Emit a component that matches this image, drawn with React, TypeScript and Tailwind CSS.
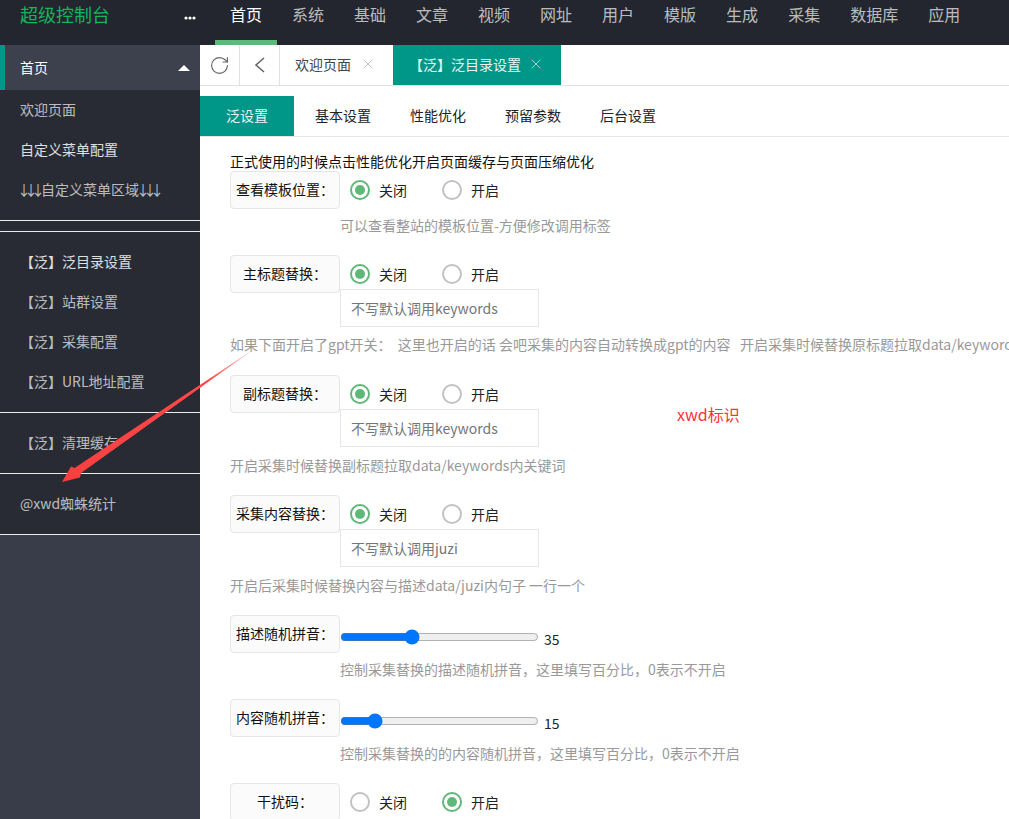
import { RotateCw, X } from "lucide-react";
import type { ReactNode } from "react";

const navItems = ["系统", "基础", "文章", "视频", "网址", "用户", "模版", "生成", "采集", "数据库", "应用"];

function SideItem({ text, bright }: { text: ReactNode; bright?: boolean }) {
  return (
    <div className={`h-10 leading-[38px] pl-5 text-sm whitespace-nowrap ${bright ? "text-white/85" : "text-white/70"}`}>{text}</div>
  );
}

function Arrows() {
  return <span className="inline-block -ml-[3px] mr-[3px] tracking-[-7px]">↓↓↓</span>;
}

function Radio({ on, label, wide }: { on?: boolean; label: string; wide?: boolean }) {
  return (
    <div className={`flex items-center ${wide ? "w-[92px]" : ""}`}>
      <span className={`w-5 h-5 rounded-full border-2 flex items-center justify-center ${on ? "border-[#5fb878]" : "border-[#c2c2c2]"}`}>
        {on && <span className="w-2.5 h-2.5 rounded-full bg-[#5fb878]" />}
      </span>
      <span className="ml-[9px] text-sm text-[#222]">{label}</span>
    </div>
  );
}

function Switch({ open }: { open?: boolean }) {
  return (
    <div className="flex items-center pl-[10px] pb-px">
      <Radio on={!open} label="关闭" wide />
      <Radio on={open} label="开启" />
    </div>
  );
}

function FormRow({ label, children }: { label: string; children: ReactNode }) {
  return (
    <div className="flex h-[38px]">
      <div className="w-[110px] shrink-0 h-[38px] border border-[#e6e6e6] bg-[#fbfbfb] rounded-sm flex items-center justify-center pb-0.5 text-sm text-[#111]">
        {label}
      </div>
      {children}
    </div>
  );
}

function TextBox({ placeholder }: { placeholder: string }) {
  return (
    <input
      placeholder={placeholder}
      className="block ml-[110px] -mt-1 w-[199px] h-[38px] border border-[#e6e6e6] px-2.5 text-sm placeholder:text-[#757575] outline-none"
    />
  );
}

function Help({ text, indent, className }: { text: string; indent?: boolean; className: string }) {
  return (
    <div className={`h-5 leading-[18px] text-sm text-[#999] whitespace-pre ${indent ? "ml-[110px]" : ""} ${className}`}>{text}</div>
  );
}

function Slider({ value }: { value: number }) {
  return (
    <div className="flex items-start">
      <input type="range" min={0} max={100} defaultValue={value} className="block w-[199px] h-4 mt-3.5 ml-0 mr-0 mb-0" />
      <span className="ml-[5px] mt-3.5 text-sm leading-5 text-[#222]">{value}</span>
    </div>
  );
}

export default function App() {
  return (
    <div
      className="relative w-[1009px] h-[819px] overflow-hidden bg-white flex flex-col"
      style={{ fontFamily: '"Noto Sans CJK SC", "Noto Sans", sans-serif' }}
    >
      {/* top bar */}
      <header className="h-[45px] shrink-0 bg-[#23262e] flex">
        <div className="w-[200px] shrink-0 flex pl-5 pr-[4px] justify-between">
          <span className="text-lg leading-7 text-[#16b45c]">超级控制台</span>
          <svg width="12" height="4" viewBox="0 0 12 4" className="mt-4">
            <circle cx="2" cy="2" r="1.6" fill="#fff" />
            <circle cx="6" cy="2" r="1.6" fill="#fff" />
            <circle cx="10" cy="2" r="1.6" fill="#fff" />
          </svg>
        </div>
        <nav className="flex pl-[15px] text-base">
          <div className="h-[45px] w-[62px] text-center leading-7 text-white border-b-[5px] border-[#5fb878]">首页</div>
          {navItems.map((item) => (
            <div key={item} className="px-[15px] leading-7 text-white/70">{item}</div>
          ))}
        </nav>
      </header>

      <div className="flex flex-1 min-h-0">
        {/* sidebar */}
        <aside className="w-[200px] shrink-0 bg-[#393d49]">
          <div className="h-[45px] flex items-center justify-between border-l-[5px] border-[#009688] pl-[15px] pr-[10px] text-sm text-white bg-[#3d404d]">
            <span className="pb-0.5">首页</span>
            <span className="w-0 h-0 border-x-[6px] border-x-transparent border-b-[6px] border-b-white" />
          </div>
          <div className="bg-[#282b33]">
            <div className="pb-[10px]">
              <SideItem text="欢迎页面" />
              <SideItem text="自定义菜单配置" bright />
              <SideItem text={<><Arrows />自定义菜单区域<Arrows /></>} />
            </div>
            <div className="h-px bg-white/90" />
            <div className="h-[10px]" />
            <div className="h-px bg-white/90" />
            <div className="pt-[10px] pb-[10px]">
              <SideItem text="【泛】泛目录设置" bright />
              <SideItem text="【泛】站群设置" />
              <SideItem text="【泛】采集配置" />
              <SideItem text="【泛】URL地址配置" />
            </div>
            <div className="h-px bg-white/90" />
            <div className="py-[10px] h-[60px]">
              <SideItem text="【泛】清理缓存" />
            </div>
            <div className="h-px bg-white/90" />
            <div className="py-[10px] h-[60px]">
              <SideItem text="@xwd蜘蛛统计" />
            </div>
            <div className="h-px bg-white/90" />
          </div>
        </aside>

        {/* main */}
        <main className="flex-1 min-w-0 overflow-hidden">
          <div className="h-[41px] flex border-b border-[#e2e2e2] text-sm">
            <div className="w-10 flex items-center justify-center border-r border-[#e2e2e2] text-[#666]">
              <RotateCw size={21} strokeWidth={1.3} />
            </div>
            <div className="w-10 flex items-center justify-center border-r border-[#e2e2e2] text-[#666]">
              <svg width="12" height="18" viewBox="0 0 12 18" fill="none" stroke="currentColor" strokeWidth="1.6">
                <polyline points="10,2 2,9 10,16" />
              </svg>
            </div>
            <div className="w-[113px] flex items-center pl-[15px] pb-0.5 text-[#444]">
              欢迎页面
              <X size={16} strokeWidth={1.3} className="ml-[9px] text-[#bbb]" />
            </div>
            <div className="w-[168px] h-10 flex items-center pl-4 pb-0.5 bg-[#009688] text-white/90">
              【泛】泛目录设置
              <X size={16} strokeWidth={1.3} className="ml-[7px] text-white/70" />
            </div>
          </div>

          <div className="mt-2.5 h-[41px] flex border-b border-[#e6e6e6] text-sm text-[#222]">
            <div className="w-[94px] h-10 bg-[#009688] text-white/90 flex items-center justify-center pb-0.5">泛设置</div>
            <div className="flex items-center h-10 pl-[21px] pb-0.5 gap-[39px]">
              <span>基本设置</span>
              <span>性能优化</span>
              <span>预留参数</span>
              <span>后台设置</span>
            </div>
          </div>

          <div className="pl-[30px] pt-[15px]">
            <div className="h-[19px] leading-[18px] text-sm text-[#111] whitespace-nowrap">正式使用的时候点击性能优化开启页面缓存与页面压缩优化</div>

            <FormRow label="查看模板位置："><Switch /></FormRow>
            <Help indent text="可以查看整站的模板位置-方便修改调用标签" className="mt-[7px] mb-[19px]" />

            <FormRow label="主标题替换："><Switch /></FormRow>
            <TextBox placeholder="不写默认调用keywords" />
            <Help text="如果下面开启了gpt开关：  这里也开启的话 会吧采集的内容自动转换成gpt的内容   开启采集时候替换原标题拉取data/keywords内关键词" className="mt-2 mb-5" />

            <div className="relative">
              <FormRow label="副标题替换："><Switch /></FormRow>
              <TextBox placeholder="不写默认调用keywords" />
              <span className="absolute left-[447px] top-[29px] text-base leading-5 text-[#ff3333]">xwd标识</span>
            </div>
            <Help text="开启采集时候替换副标题拉取data/keywords内关键词" className="mt-[9px] mb-[19px]" />

            <FormRow label="采集内容替换："><Switch /></FormRow>
            <TextBox placeholder="不写默认调用juzi" />
            <Help text="开启后采集时候替换内容与描述data/juzi内句子 一行一个" className="mt-[9px] mb-[19px]" />

            <FormRow label="描述随机拼音："><Slider value={35} /></FormRow>
            <Help indent text="控制采集替换的描述随机拼音，这里填写百分比，0表示不开启" className="mt-[7px] mb-[19px]" />

            <FormRow label="内容随机拼音："><Slider value={15} /></FormRow>
            <Help indent text="控制采集替换的的内容随机拼音，这里填写百分比，0表示不开启" className="mt-[7px] mb-[19px]" />

            <FormRow label="干扰码："><Switch open /></FormRow>
          </div>
        </main>
      </div>

      {/* red annotation arrow drawn over the screenshot */}
      <svg className="absolute left-0 top-0 pointer-events-none" width="1009" height="819" viewBox="0 0 1009 819">
        <defs>
          <linearGradient id="arrowFade" gradientUnits="userSpaceOnUse" x1="257" y1="347" x2="62" y2="482">
            <stop offset="0" stopColor="#ffd0d0" />
            <stop offset="0.25" stopColor="#ff4a4a" />
            <stop offset="1" stopColor="#fa3e3e" />
          </linearGradient>
        </defs>
        <polygon points="257,347 81,473 80,477.5 62,482 71,466.5 74.5,468" fill="url(#arrowFade)" />
      </svg>
    </div>
  );
}
